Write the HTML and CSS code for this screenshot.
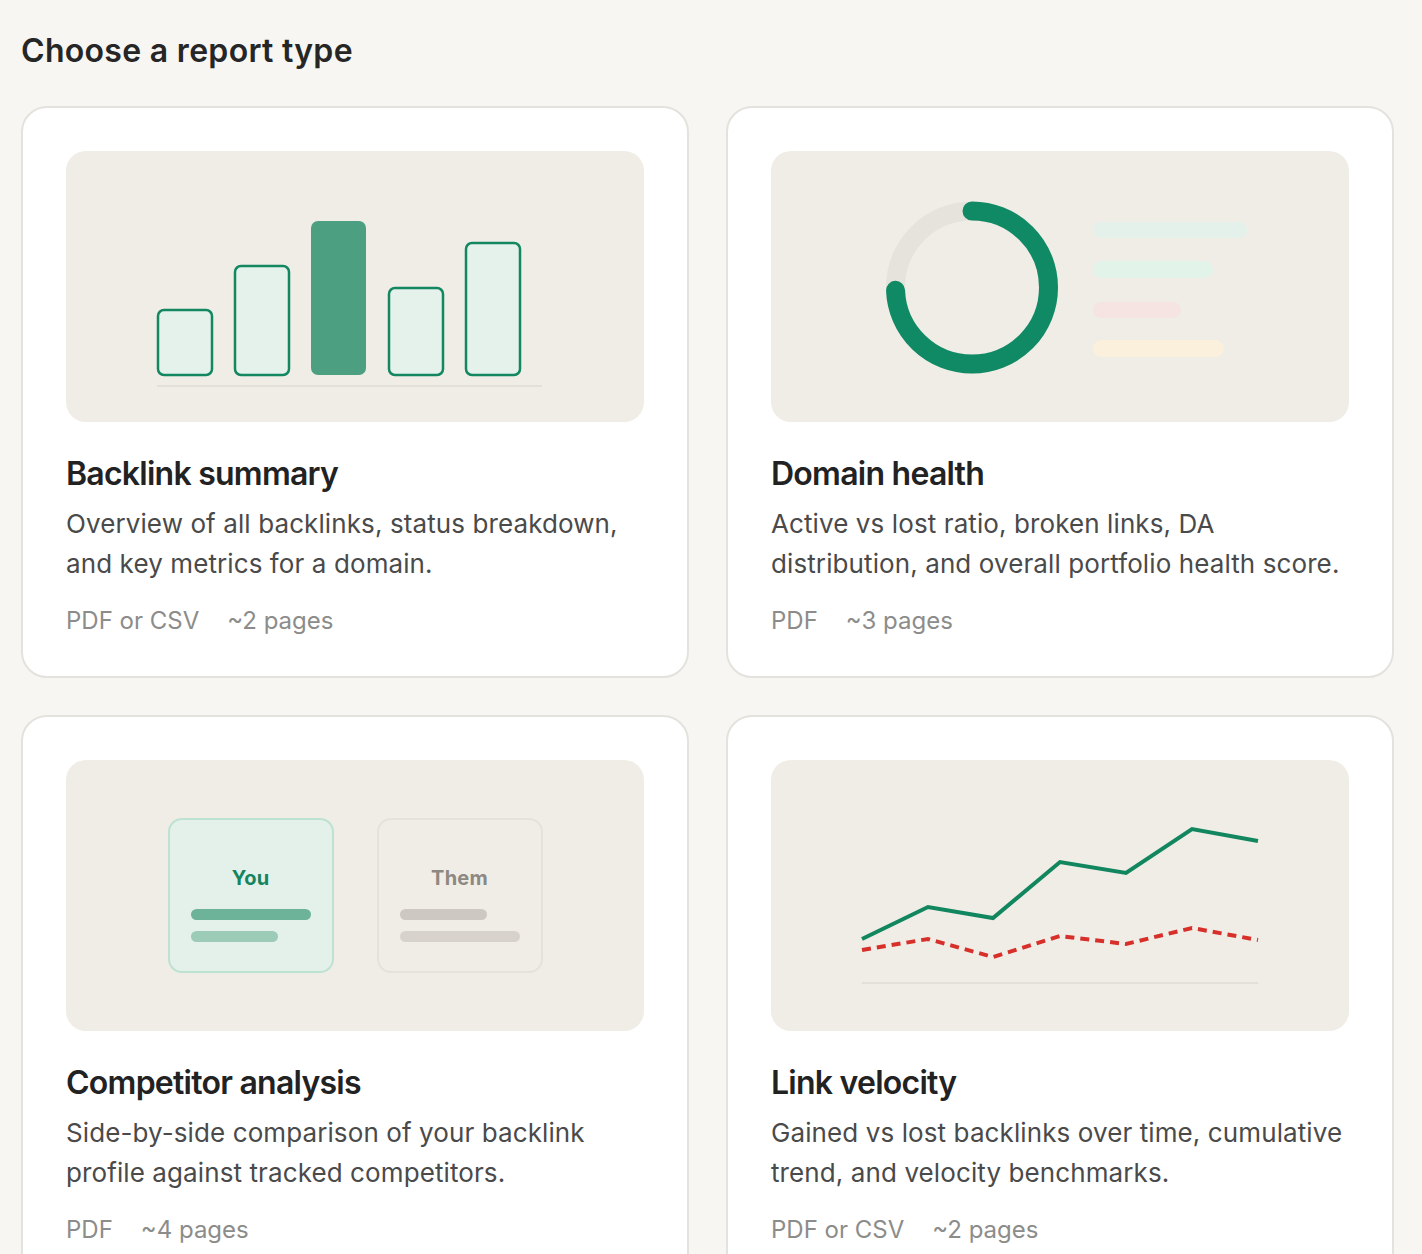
FILE: index.html
```html
<!DOCTYPE html>
<html lang="en">
<head>
    <meta charset="UTF-8">
    <title>Reports – Choose a report type</title>
    <link rel="stylesheet" href="styles.css">
</head>
<body>
    <h1>Choose a report type</h1>

    <div class="report-grid">
        <div class="report-card">
            <div class="preview">
                <!-- bar chart -->
                <svg viewBox="0 0 578 271" width="578" height="271">
                    <rect class="bar" x="92" y="159" width="54" height="65" rx="6"></rect>
                    <rect class="bar" x="169" y="115" width="54" height="109" rx="6"></rect>
                    <rect class="bar-solid" x="245" y="70" width="55" height="154" rx="7"></rect>
                    <rect class="bar" x="323" y="137" width="54" height="87" rx="6"></rect>
                    <rect class="bar" x="400" y="92" width="54" height="132" rx="6"></rect>
                    <line class="axis" x1="91" y1="235" x2="476" y2="235"></line>
                </svg>
            </div>
            <h2>Backlink summary</h2>
            <p class="desc">Overview of all backlinks, status breakdown, and key metrics for a domain.</p>
            <div class="meta"><span>PDF or CSV</span><span>~2 pages</span></div>
        </div>

        <div class="report-card">
            <div class="preview">
                <!-- health donut + legend -->
                <svg viewBox="0 0 578 271" width="578" height="271">
                    <circle class="ring-track" cx="201" cy="136.5" r="76.5"></circle>
                    <circle class="ring" cx="201" cy="136.5" r="76.5" stroke-dasharray="357 500" transform="rotate(-90 201 136.5)"></circle>
                    <rect x="322" y="71" width="154" height="16" rx="8" fill="#e4f1ea"></rect>
                    <rect x="322" y="110" width="120" height="17" rx="8.5" fill="#e2f3ea"></rect>
                    <rect x="322" y="151" width="88" height="16" rx="8" fill="#f5e4e1"></rect>
                    <rect x="322" y="189" width="131" height="17" rx="8.5" fill="#faf0dc"></rect>
                </svg>
            </div>
            <h2>Domain health</h2>
            <p class="desc">Active vs lost ratio, broken links, DA distribution, and overall portfolio health score.</p>
            <div class="meta"><span>PDF</span><span>~3 pages</span></div>
        </div>

        <div class="report-card">
            <div class="preview preview-compare">
                <div class="side side-you">
                    <strong>You</strong>
                    <span class="line line-long"></span>
                    <span class="line line-short"></span>
                </div>
                <div class="side side-them">
                    <strong>Them</strong>
                    <span class="line line-short"></span>
                    <span class="line line-long"></span>
                </div>
            </div>
            <h2>Competitor analysis</h2>
            <p class="desc">Side-by-side comparison of your backlink profile against tracked competitors.</p>
            <div class="meta"><span>PDF</span><span>~4 pages</span></div>
        </div>

        <div class="report-card">
            <div class="preview">
                <!-- gained vs lost over time -->
                <svg viewBox="0 0 578 271" width="578" height="271">
                    <line class="axis" x1="91" y1="223" x2="487" y2="223"></line>
                    <polyline class="gained" points="91,179 157,147 222,158 289,102 355,113 421,69 487,81"></polyline>
                    <polyline class="lost" points="91,190 157,179 222,197 289,176 355,184 421,168 487,180"></polyline>
                </svg>
            </div>
            <h2>Link velocity</h2>
            <p class="desc">Gained vs lost backlinks over time, cumulative trend, and velocity benchmarks.</p>
            <div class="meta"><span>PDF or CSV</span><span>~2 pages</span></div>
        </div>
    </div>
</body>
</html>
```

FILE: styles.css
```css
body { margin: 0; padding: 31px 28px 40px 21px; background: #f7f6f3; font-family: Inter, "Liberation Sans", sans-serif; color: #262626; }
h1 { margin: 0 0 35px; font-size: 32px; line-height: 40px; font-weight: 600; color: #262626; letter-spacing: 0.3px; }

.report-grid { display: grid; grid-template-columns: 1fr 1fr; gap: 37px; }
.report-card { background: #fff; border: 2px solid #e4e2dd; border-radius: 26px; padding: 43px 43px 39px; }

.preview { height: 271px; background: #f0ede7; border-radius: 20px; overflow: hidden; }
.preview svg { display: block; width: 100%; height: 100%; }

.report-card h2 { margin: 32px 0 0; font-size: 32px; line-height: 40px; font-weight: 600; color: #222; letter-spacing: -0.75px; }
.desc { margin: 10px 0 0; font-size: 26px; line-height: 40px; color: #4a4a4a; letter-spacing: 0.1px; }
.meta { display: flex; gap: 28px; margin-top: 21px; font-size: 24px; line-height: 32px; color: #8c8c8a; letter-spacing: 0; }

/* bar chart */
.bar { fill: #e5f1eb; stroke: #13875f; stroke-width: 2.5; }
.bar-solid { fill: #4c9f81; }
.axis { stroke: #e3dfd9; stroke-width: 2; }

/* donut */
.ring-track { fill: none; stroke: #e6e2dc; stroke-width: 19; }
.ring { fill: none; stroke: #0f8a64; stroke-width: 19; stroke-linecap: round; }

/* velocity lines */
.gained { fill: none; stroke: #12875f; stroke-width: 4; stroke-linejoin: miter; }
.lost { fill: none; stroke: #d7302b; stroke-width: 4; stroke-dasharray: 9 6; }

/* competitor boxes */
.preview-compare { display: flex; justify-content: center; align-items: center; gap: 43px; }
.side { width: 166px; height: 155px; box-sizing: border-box; border-radius: 14px; border: 2px solid #e5e1db; padding: 0 21px; display: flex; flex-direction: column; align-items: center; }
.side strong { margin-top: 45px; font-size: 20px; line-height: 26px; font-weight: 700; letter-spacing: 0.2px; }
.side .line { display: block; align-self: stretch; height: 11px; border-radius: 6px; margin-top: 11px; }
.side strong + .line { margin-top: 18px; }
.side-you { background: #e4f1eb; border-color: #bde2d1; }
.side-you strong { color: #15855f; }
.side-you .line-long { background: #6db39a; }
.side-you .line-short { background: #9ccbb8; margin-right: 33px; }
.side-them { background: #f0ede7; }
.side-them strong { color: #8d8982; }
.side-them .line-short { background: #cdc9c2; margin-right: 33px; }
.side-them .line-long { background: #d7d3cc; }
```
